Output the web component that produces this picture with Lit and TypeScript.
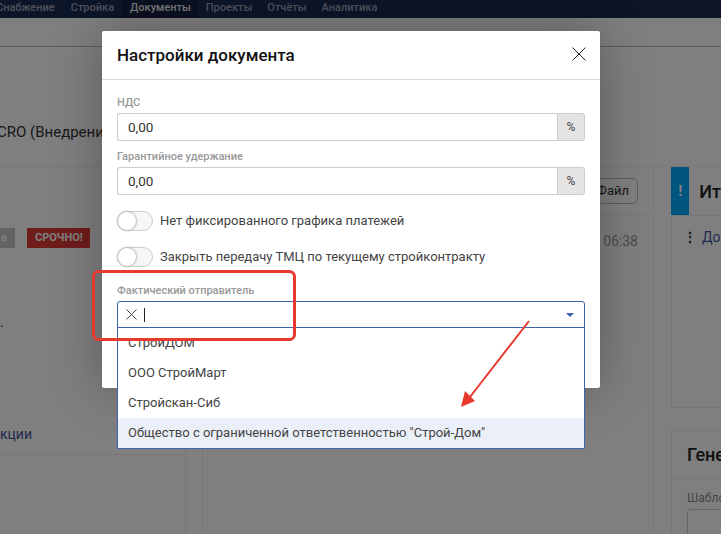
import { LitElement, html, css } from "lit";
import { customElement } from "lit/decorators.js";

@customElement("app-root")
export class AppRoot extends LitElement {
  static styles = css`
    :host { display: block; position: relative; width: 721px; height: 534px; overflow: hidden; background: #fff; font-family: Roboto, "Noto Sans", sans-serif; color: #333; }
    .page { display: flex; flex-direction: column; height: 534px; }
    .nav { height: 18px; flex: none; display: flex; background: #1a2a52; color: #fff; font-size: 11px; font-weight: 500; line-height: 15px; margin-left: -4px; }
    .nav span { padding: 0 8px; height: 18px; color: rgba(255,255,255,.58); }
    .nav span:first-child { padding-left: 0; }
    .nav .active { background: #142244; color: rgba(255,255,255,.95); }
    .nav .tight { padding-right: 7px; }
    .crumbs { height: 28px; flex: none; border-bottom: 1px solid #bbb; }
    .head { height: 119px; flex: none; border-bottom: 1px solid #eee; display: flex; align-items: flex-end; }
    .head span { font-size: 15px; margin: 0 0 25px -3px; white-space: nowrap; }
    .cols { flex: 1; display: flex; min-height: 0; }
    .left { width: 185px; flex: none; border-right: 1px solid #eee; display: flex; flex-direction: column; }
    .chips { display: flex; gap: 12px; padding-top: 61px; margin-left: -30px; }
    .chip { height: 20px; line-height: 20px; font-size: 11px; font-weight: 700; color: #fff; padding: 0 8px; background: #c6c6c6; width: 29px; text-align: right; }
    .chip.red { background: #dd3b37; width: 47px; text-align: center; }
    .dot { font-size: 13px; padding-top: 67px; }
    .link { font-size: 14px; color: #41549c; margin: 96px 0 0 -6px; padding: 0 0 12px 6px; border-bottom: 1px solid #eee; }
    .mid { margin-left: 16px; width: 450px; flex: none; border: 1px solid #eee; border-width: 0 1px; display: flex; flex-direction: column; }
    .midhead { height: 48px; flex: none; border-bottom: 1px solid #eee; display: flex; justify-content: flex-end; padding: 11px 15px 0 0; box-sizing: border-box; }
    .btn { height: 26px; width: 50px; border: 1px solid #bbb; border-radius: 5px; font-size: 13px; line-height: 24px; text-align: right; padding-right: 8px; box-sizing: border-box; }
    .time { font-size: 14px; color: #999; text-align: right; padding: 18px 15px 0 0; }
    .right { margin-left: 17px; flex: 1; min-width: 0; display: flex; flex-direction: column; gap: 22px; }
    .card { border: 1px solid #eee; border-right: 0; }
    .card.one { height: 240px; border-top: 0; flex: none; }
    .card.two { flex: 1; }
    .cardhead { height: 48px; display: flex; align-items: center; border-bottom: 1px solid #eee; font-size: 18px; font-weight: 500; color: #222; white-space: nowrap; }
    .flag { width: 25px; height: 48px; background: #00abff; color: #fff; display: flex; align-items: center; justify-content: center; font-size: 15px; font-weight: 700; margin-right: 10px; margin-left: -1px; }
    .row { font-size: 14px; color: #41549c; padding: 13px 0 0 11px; display: flex; gap: 5px; }
    .row b { color: #333; font-weight: 700; }
    .cardhead.gen { padding-left: 15px; height: 47px; }
    .muted { font-size: 12px; color: #888; padding: 12px 0 0 15px; }
    .fake { margin: 4px 0 0 15px; height: 40px; border: 1px solid #ccc; border-radius: 4px 0 0 4px; border-right: 0; }

    .overlay { position: absolute; inset: 0; background: rgba(0,0,0,.5); }
    .modal { position: absolute; left: 102px; top: 31px; width: 498px; height: 357px; background: #fff; border-radius: 2px; box-shadow: 0 0 50px rgba(0,0,0,.3); }
    .mhead { height: 49px; box-sizing: border-box; border-bottom: 1px solid #d8d8d8; display: flex; align-items: center; justify-content: space-between; padding: 0 14px 0 15px; font-size: 17px; font-weight: 500; color: #111; }
    .mhead svg { display: block; margin-bottom: 2px; }
    .body { padding: 16px 15px 0; display: flex; flex-direction: column; }
    label { font-size: 11px; font-weight: 500; color: #999; line-height: 14px; display: block; margin-bottom: 3px; }
    .field { display: flex; height: 28px; margin-bottom: 9px; }
    .val { flex: 1; border: 1px solid #ccc; border-right: 0; border-radius: 3px 0 0 3px; font-size: 13.5px; line-height: 26px; padding-left: 10px; color: #333; }
    .addon { width: 28px; box-sizing: border-box; border: 1px solid #ccc; border-radius: 0 3px 3px 0; background: #e4e4e4; font-size: 12px; line-height: 26px; text-align: center; color: #444; }
    .sw { display: flex; align-items: center; gap: 7px; height: 20px; margin-bottom: 16px; font-size: 13px; color: #444; }
    .sw.first { margin-top: 7px; }
    .sw span { margin-bottom: 2px; }
    .lbl-last { margin-top: 1px; }
    .switch { width: 36px; height: 20px; box-sizing: border-box; border: 1px solid #ccc; border-radius: 10px; background: #f6f6f6; position: relative; flex: none; }
    .switch i { position: absolute; left: 0; top: 0; width: 18px; height: 18px; border-radius: 50%; background: #fff; box-shadow: 0 0 2px 1px #bbb; }

    .select { position: absolute; left: 117px; top: 301px; width: 468px; border: 1px solid #3f63ad; border-radius: 3px 3px 0 0; box-sizing: border-box; background: #fff; color: #444; }
    .control { height: 25px; display: flex; align-items: center; padding-left: 8px; border-bottom: 1px solid #3f63ad; }
    .caret { width: 1px; height: 14px; background: #222; margin-left: 7px; }
    .tri { margin-left: auto; margin-right: 10px; width: 0; height: 0; border: 4px solid transparent; border-top: 4px solid #3f63ad; border-bottom: 0; }
    .opt { height: 30px; line-height: 30px; padding-left: 10px; font-size: 13px; }
    .opt.hl { background: #ebeff8; }
    .anno { position: absolute; left: 0; top: 0; pointer-events: none; }
  `;

  render() {
    return html`
      <div class="page">
        <div class="nav">
          <span>Снабжение</span><span>Стройка</span><span class="active tight">Документы</span><span class="tight">Проекты</span><span class="tight">Отчёты</span><span>Аналитика</span>
        </div>
        <div class="crumbs"></div>
        <div class="head"><span>CRO (Внедрение</span></div>
        <div class="cols">
          <div class="left">
            <div class="chips"><div class="chip">а</div><div class="chip red">СРОЧНО!</div></div>
            <div class="dot">.</div>
            <div class="link">кции</div>
          </div>
          <div class="mid">
            <div class="midhead"><div class="btn">Файл</div></div>
            <div class="time">06:38</div>
          </div>
          <div class="right">
            <div class="card one">
              <div class="cardhead"><div class="flag">!</div>Ит</div>
              <div class="row"><b>⋮</b>До</div>
            </div>
            <div class="card two">
              <div class="cardhead gen">Гене</div>
              <div class="muted">Шабло</div>
              <div class="fake"></div>
            </div>
          </div>
        </div>
      </div>
      <div class="overlay"></div>
      <div class="modal">
        <div class="mhead">
          <span>Настройки документа</span>
          <svg width="14" height="14" viewBox="0 0 14 14"><path d="M.5.5l13 13M13.5.5l-13 13" stroke="#222" fill="none"/></svg>
        </div>
        <div class="body">
          <label>НДС</label>
          <div class="field"><div class="val">0,00</div><div class="addon">%</div></div>
          <label>Гарантийное удержание</label>
          <div class="field"><div class="val">0,00</div><div class="addon">%</div></div>
          <div class="sw first"><div class="switch"><i></i></div><span>Нет фиксированного графика платежей</span></div>
          <div class="sw"><div class="switch"><i></i></div><span>Закрыть передачу ТМЦ по текущему стройконтракту</span></div>
          <label class="lbl-last">Фактический отправитель</label>
        </div>
      </div>
      <div class="select">
        <div class="control">
          <svg width="11" height="11" viewBox="0 0 11 11"><path d="M.5.5l10 10M10.5.5l-10 10" stroke="#444" fill="none"/></svg>
          <div class="caret"></div>
          <div class="tri"></div>
        </div>
        <div class="opt">СтройДОМ</div>
        <div class="opt">ООО СтройМарт</div>
        <div class="opt">Стройскан-Сиб</div>
        <div class="opt hl">Общество с ограниченной ответственностью "Строй-Дом"</div>
      </div>
      <svg class="anno" width="721" height="534" viewBox="0 0 721 534">
        <rect x="93.5" y="271.5" width="201" height="68" rx="5" fill="none" stroke="#e8392e" stroke-width="3"/>
        <path d="M529 321L470 397" stroke="#e8392e" stroke-width="2" fill="none"/>
        <path d="M461 407L465 391L475 401Z" fill="#e8392e"/>
      </svg>
    `;
  }
}
